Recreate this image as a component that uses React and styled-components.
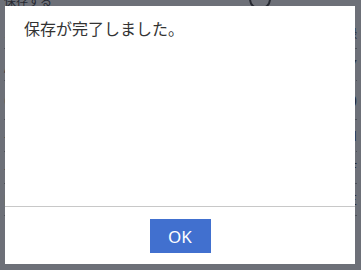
import React from "react";
import styled, { createGlobalStyle } from "styled-components";

const Global = createGlobalStyle`
  html, body { margin: 0; padding: 0; }
  body { font-family: "Noto Sans CJK JP", "Noto Sans", sans-serif; }
`;

const Stage = styled.div`
  position: relative;
  width: 361px;
  height: 270px;
  overflow: hidden;
  background: #ffffff;
`;

const Page = styled.div`
  display: flex;
  flex-direction: column;
  height: 100%;
  padding: 0 4px;
  box-sizing: border-box;
  color: #222;
  font-size: 13px;
`;

const PageHeader = styled.div`
  display: flex;
  justify-content: space-between;
  align-items: center;
  height: 12px;
  line-height: 12px;
  margin-top: -5px;
  margin-bottom: 10px;
  font-size: 12px;
`;

const Circle = styled.div`
  width: 18px;
  height: 18px;
  border: 2px solid #222;
  border-radius: 50%;
  margin: -4px 86px 0 0;
`;

const PageRow = styled.div`
  display: flex;
  justify-content: space-between;
  padding: 6px 0;
  border-bottom: 1px ${(p) => (p.dotted ? "dotted" : "solid")} #999;
  font-size: ${(p) => p.size || 13}px;
  font-weight: ${(p) => (p.bold ? 700 : 400)};
`;

const Overlay = styled.div`
  position: absolute;
  inset: 0;
  background: rgba(40, 44, 56, 0.68);
  display: flex;
  padding: 6px 6px 6px 5px;
  box-sizing: border-box;
`;

const Dialog = styled.div`
  flex: 1;
  display: flex;
  flex-direction: column;
  background: #ffffff;
`;

const Body = styled.div`
  flex: 1;
  padding: 11px 19px;
  font-size: 16px;
  line-height: 22px;
  color: #333333;
  border-bottom: 1px solid #c8c8c8;
`;

const Footer = styled.div`
  display: flex;
  justify-content: center;
  padding: 12px 0 11px;
`;

const Button = styled.button`
  width: 61px;
  height: 34px;
  border: none;
  background: #4170cf;
  color: #ffffff;
  font-family: "Noto Sans", sans-serif;
  font-size: 17px;
  padding: 0;
  cursor: pointer;
`;

export default function App() {
  return (
    <Stage>
      <Global />
      <Page>
        <PageHeader>
          <span>保存する</span>
          <Circle />
        </PageHeader>
        <PageRow>
          <span>1</span>
          <span>登録</span>
        </PageRow>
        <PageRow dotted>
          <span>/</span>
          <span>7</span>
        </PageRow>
        <PageRow bold size={18}>
          <span>O</span>
          <span>D</span>
        </PageRow>
        <PageRow dotted>
          <span>—</span>
          <span>N</span>
        </PageRow>
        <PageRow>
          <span>—</span>
          <span>F</span>
        </PageRow>
        <PageRow>
          <span>E</span>
          <span>IE</span>
        </PageRow>
      </Page>
      <Overlay>
        <Dialog role="dialog">
          <Body>保存が完了しました。</Body>
          <Footer>
            <Button>OK</Button>
          </Footer>
        </Dialog>
      </Overlay>
    </Stage>
  );
}
